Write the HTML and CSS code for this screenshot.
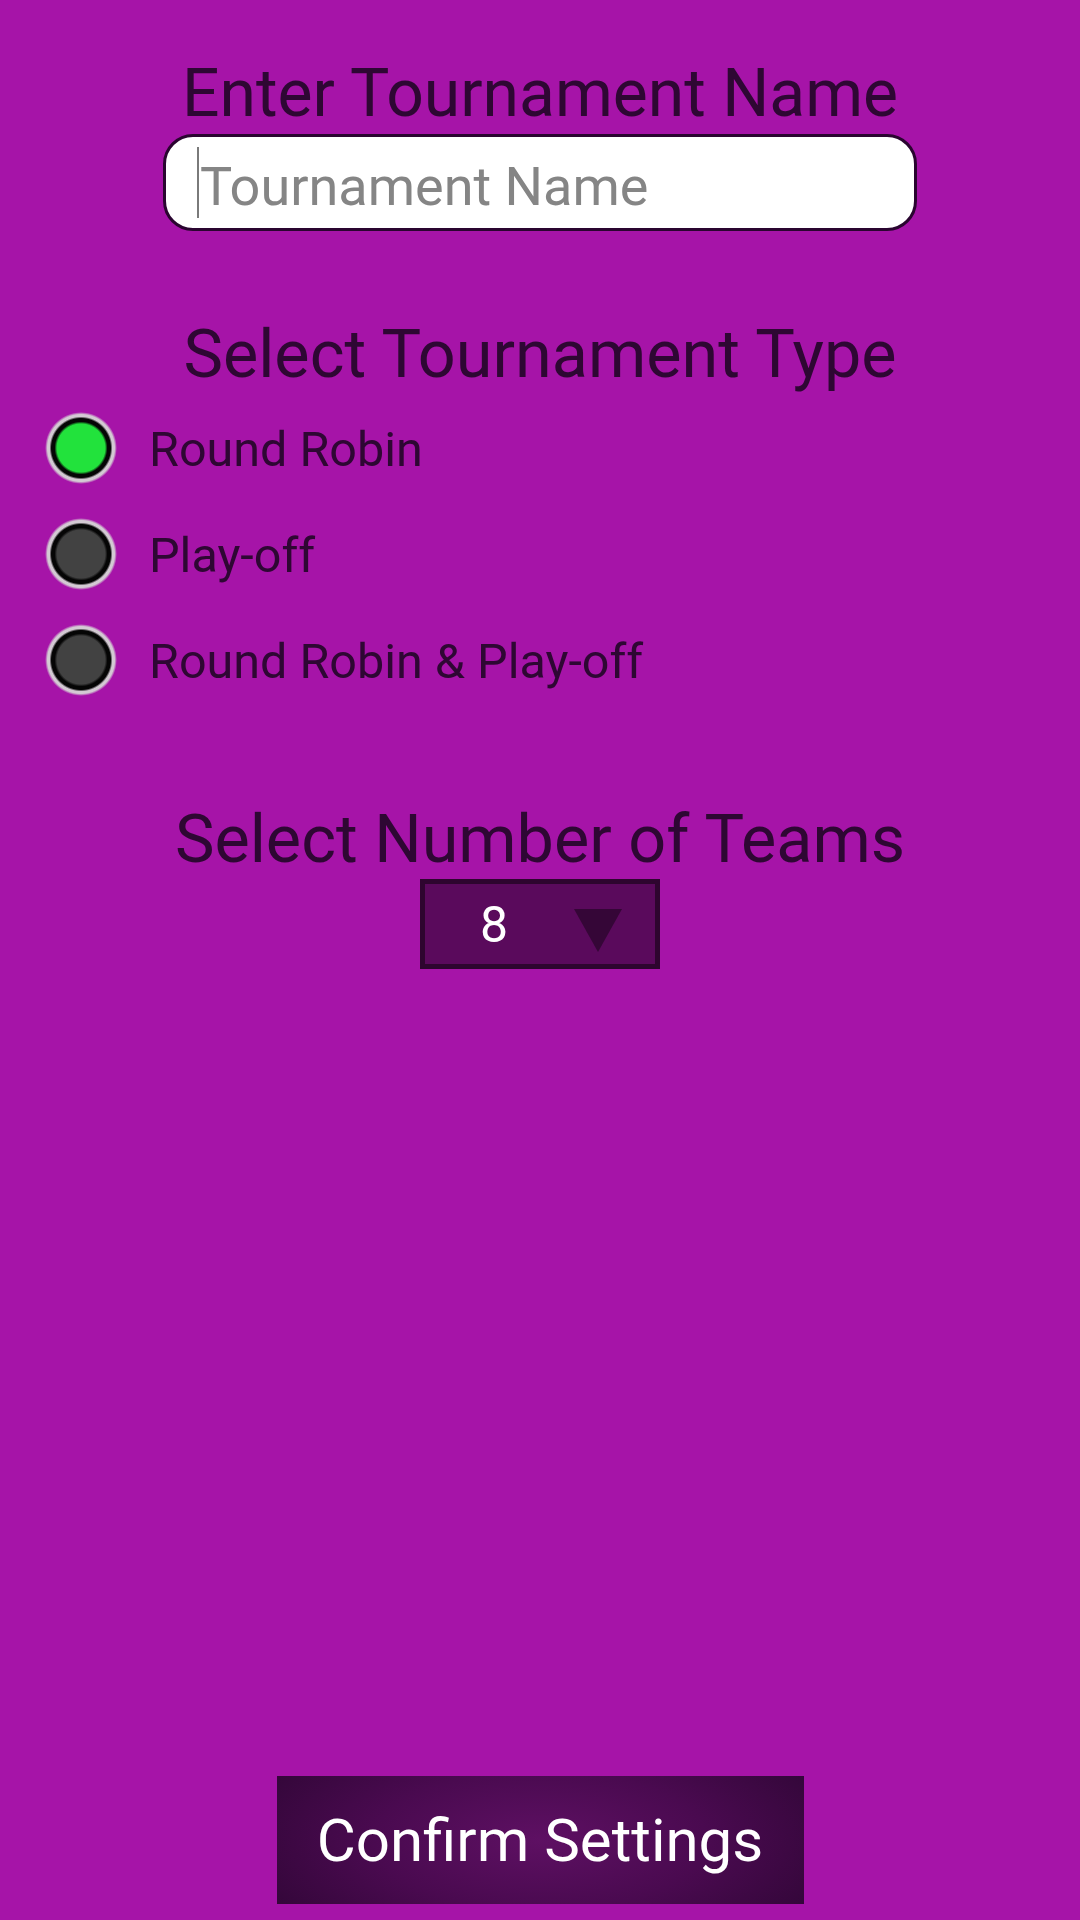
FILE: index.html
```html
<!DOCTYPE html>
<html lang="en">
<head>
<meta charset="utf-8">
<title>Tournament Settings</title>
<link rel="stylesheet" href="styles.css">
</head>
<body>
<main class="screen">
  <h1 class="title title-name">Enter Tournament Name</h1>
  <div class="name-input">
    <span class="caret"></span>
    <span class="placeholder">Tournament Name</span>
  </div>

  <h2 class="title title-type">Select Tournament Type</h2>
  <ul class="options">
    <li class="option"><span class="radio radio-on"></span><span class="option-label">Round Robin</span></li>
    <li class="option"><span class="radio"></span><span class="option-label">Play-off</span></li>
    <li class="option"><span class="radio"></span><span class="option-label">Round Robin &amp; Play-off</span></li>
  </ul>

  <h2 class="title title-teams">Select Number of Teams</h2>
  <div class="select">
    <span class="select-value">8</span>
    <svg class="select-arrow" width="48" height="43" viewBox="0 0 48 43"><polygon points="0,0 48,0 24,43" fill="#350637"/></svg>
  </div>

  <button class="confirm">Confirm Settings</button>
</main>
</body>
</html>
```

FILE: styles.css
```css
* { box-sizing: border-box; }

html, body {
  margin: 0;
  padding: 0;
  background: #a614a8;
}

.screen {
  min-height: 100vh;
  display: flex;
  flex-direction: column;
  align-items: center;
  padding-top: 54px;
  padding-bottom: 16px;
  font-family: Roboto, "Liberation Sans", sans-serif;
}

.title {
  margin: 0;
  font-size: 66px;
  line-height: 80px;
  font-weight: 400;
  color: #2e0733;
  text-align: center;
}

.title-type,
.title-teams { font-size: 66.5px; }

.name-input {
  margin-top: 0;
  width: 754px;
  height: 97px;
  border: 3px solid #2a0530;
  border-radius: 30px;
  background: #ffffff;
  display: flex;
  align-items: center;
  padding-left: 31px;
}

.caret {
  width: 2px;
  height: 71px;
  background: #7a7a7a;
  margin-right: 1px;
}

.placeholder {
  font-size: 54px;
  color: #858585;
  line-height: 1;
  padding-top: 8px;
}

.title-type { margin-top: 83px; }

.options {
  list-style: none;
  margin: 1px 0 0;
  padding: 0 0 0 45px;
  align-self: stretch;
  display: flex;
  flex-direction: column;
}

.option {
  height: 106px;
  display: flex;
  align-items: center;
  gap: 32px;
}

.radio {
  --fill: #424242;
  width: 72px;
  height: 72px;
  flex: none;
  border-radius: 50%;
  background: radial-gradient(circle closest-side,
    var(--fill) 0, var(--fill) 24px,
    #050505 26.5px, #050505 29.5px,
    #d3cad3 31.5px, #d3cad3 33.5px,
    rgba(211, 202, 211, 0) 36px);
}

.radio-on { --fill: #22e23c; }

.option-label {
  font-size: 48.5px;
  color: #2e0733;
  line-height: 1;
  padding-top: 4px;
}

.title-teams { margin-top: 86px; }

.select {
  width: 240px;
  height: 90px;
  background: #5a0a5c;
  border: 5px solid #2e052f;
  display: flex;
  align-items: center;
  padding-left: 55px;
}

.select-value {
  font-size: 50px;
  line-height: 1;
  color: #ffffff;
  width: 28px;
  padding-top: 2px;
}

.select-arrow {
  margin-left: 66px;
  margin-top: 12px;
}

.confirm {
  margin-top: auto;
  width: 527px;
  height: 128px;
  border: none;
  padding: 0;
  background: radial-gradient(ellipse 70% 120% at center, #5e1063 0%, #4a0a50 45%, #2a0530 100%);
  color: #ffffff;
  font-family: Roboto, "Liberation Sans", sans-serif;
  font-size: 60px;
  font-weight: 400;
}
```
